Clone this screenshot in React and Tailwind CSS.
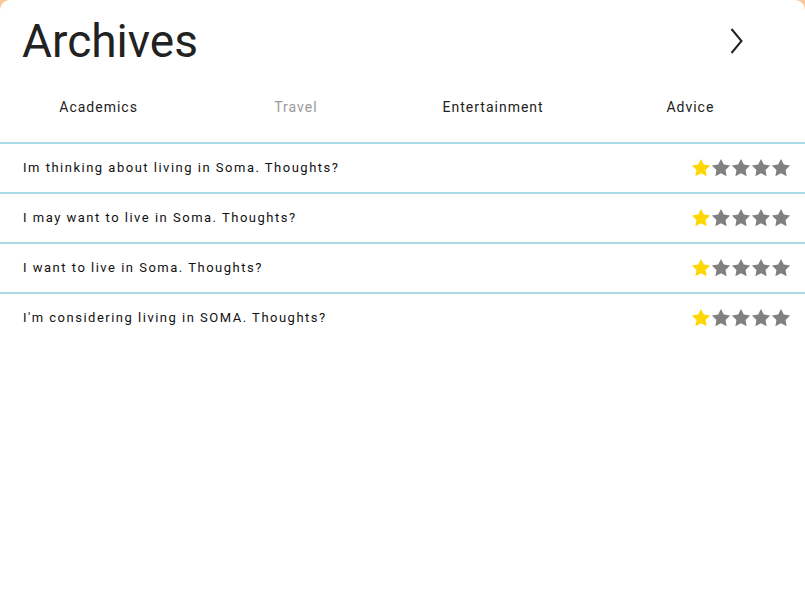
import React from "react";

const tabs = [
  { label: "Academics", active: false },
  { label: "Travel", active: true },
  { label: "Entertainment", active: false },
  { label: "Advice", active: false },
];

const posts = [
  { title: "Im thinking about living in Soma. Thoughts?", rating: 1 },
  { title: "I may want to live in Soma. Thoughts?", rating: 1 },
  { title: "I want to live in Soma. Thoughts?", rating: 1 },
  { title: "I'm considering living in SOMA. Thoughts?", rating: 1 },
];

function Star({ filled }) {
  return (
    <svg viewBox="1 1 22 22" className="w-5 h-5">
      <polygon
        points="12,2 15.09,8.26 22,9.27 17,14.14 18.18,21.02 12,17.77 5.82,21.02 7,14.14 2,9.27 8.91,8.26"
        fill={filled ? "#FFD700" : "#808080"}
      />
    </svg>
  );
}

function App() {
  return (
    <div className="min-h-screen bg-[#f9c89b] font-['Roboto',sans-serif]">
      <div className="min-h-screen bg-white rounded-t-[10px]">
        <div className="flex items-start justify-between pl-[22px] pr-[61px] h-[72px]">
          <h1 className="text-[46px] text-[#222] leading-none pt-[18px]">
            Archives
          </h1>
          <svg viewBox="0 0 15 28" className="w-[15px] h-[28px] mt-[27px]">
            <path
              d="M2.5 2L12.5 14L2.5 26"
              fill="none"
              stroke="#222"
              strokeWidth="2"
            />
          </svg>
        </div>
        <div className="grid grid-cols-4 h-[70px] items-center pr-[16px]">
          {tabs.map((t) => (
            <button
              key={t.label}
              className={`text-[14px] tracking-[1px] ${
                t.active ? "text-[#999]" : "text-[#222]"
              }`}
            >
              {t.label}
            </button>
          ))}
        </div>
        <ul>
          {posts.map((p) => (
            <li
              key={p.title}
              className="flex items-center justify-between h-[50px] border-t-2 border-[#add8e6] pl-[23px] pr-[14px]"
            >
              <span className="text-[13px] tracking-[1.5px] text-[#111]">
                {p.title}
              </span>
              <div className="flex">
                {[1, 2, 3, 4, 5].map((n) => (
                  <Star key={n} filled={n <= p.rating} />
                ))}
              </div>
            </li>
          ))}
        </ul>
      </div>
    </div>
  );
}

export default App;
